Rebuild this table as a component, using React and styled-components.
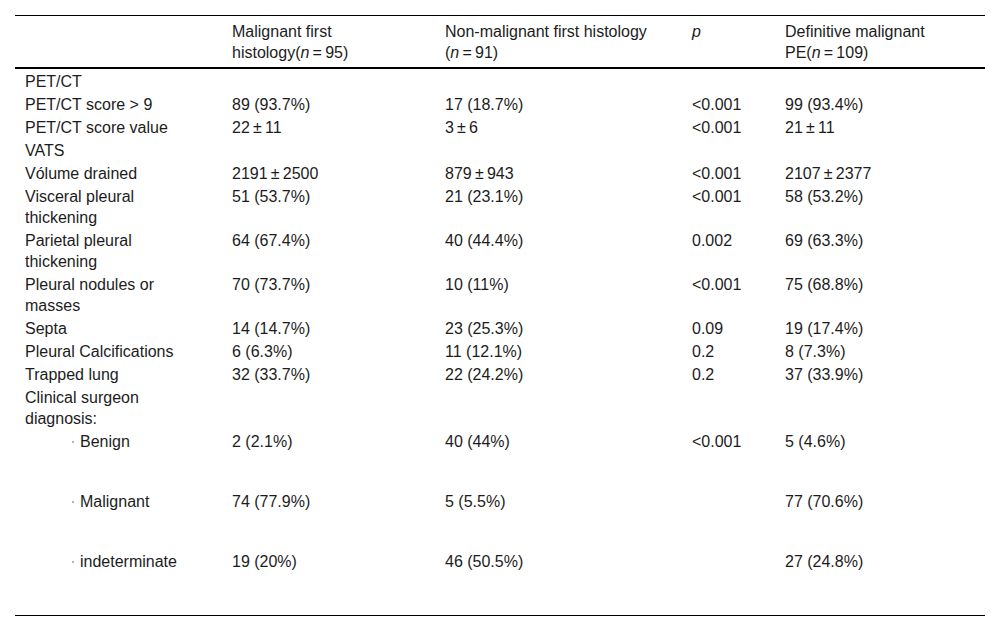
import React from "react";
import styled, { createGlobalStyle } from "styled-components";

const Global = createGlobalStyle`
  html, body { margin: 0; padding: 0; background: #fff; }
  body { font-family: "Liberation Sans", Arial, sans-serif; }
`;

const Table = styled.table`
  width: 970px;
  margin: 15px;
  border-collapse: separate;
  border-spacing: 0;
  table-layout: fixed;
  font-family: "Liberation Sans", Arial, sans-serif;
  font-size: 16px;
  line-height: 21px;
  color: #1c1c1c;
`;

const Th = styled.th`
  box-sizing: border-box;
  width: ${(p) => p.$w}px;
  text-align: left;
  font-weight: normal;
  vertical-align: top;
  padding: 5px ${(p) => (p.$first ? 40 : 10)}px 4px 10px;
  border-top: 1px solid #000;
  border-bottom: 2px solid #000;
`;

const Td = styled.td`
  box-sizing: border-box;
  text-align: left;
  vertical-align: top;
  padding: 2px ${(p) => (p.$first ? 40 : 10)}px ${(p) => p.$pb}px 10px;
  border-bottom: ${(p) => (p.$last ? "1px solid #000" : "none")};
`;

const Em = styled.i`
  font-style: italic;
`;

const NoWrap = styled.span`
  white-space: nowrap;
`;

const Bullet = styled.span`
  display: flex;
  align-items: center;
  padding-left: 47px;
  &::before {
    content: "";
    width: 2px;
    height: 2px;
    border-radius: 50%;
    background: #9a9a9a;
    margin-right: 6px;
    flex: none;
  }
`;

const T = "\u2009";

const cols = [207, 213, 247, 93, 210];

const rows = [
  { c: ["PET/CT", "", "", "", ""] },
  { c: ["PET/CT score > 9", "89 (93.7%)", "17 (18.7%)", "<0.001", "99 (93.4%)"] },
  { c: ["PET/CT score value", `22${T}±${T}11`, `3${T}±${T}6`, "<0.001", `21${T}±${T}11`] },
  { c: ["VATS", "", "", "", ""] },
  { c: ["Vólume drained", `2191${T}±${T}2500`, `879${T}±${T}943`, "<0.001", `2107${T}±${T}2377`] },
  { c: ["Visceral pleural thickening", "51 (53.7%)", "21 (23.1%)", "<0.001", "58 (53.2%)"] },
  { c: ["Parietal pleural thickening", "64 (67.4%)", "40 (44.4%)", "0.002", "69 (63.3%)"] },
  { c: ["Pleural nodules or masses", "70 (73.7%)", "10 (11%)", "<0.001", "75 (68.8%)"] },
  { c: ["Septa", "14 (14.7%)", "23 (25.3%)", "0.09", "19 (17.4%)"] },
  { c: ["Pleural Calcifications", "6 (6.3%)", "11 (12.1%)", "0.2", "8 (7.3%)"] },
  { c: ["Trapped lung", "32 (33.7%)", "22 (24.2%)", "0.2", "37 (33.9%)"] },
  { c: ["Clinical surgeon diagnosis:", "", "", "", ""] },
  { c: ["Benign", "2 (2.1%)", "40 (44%)", "<0.001", "5 (4.6%)"], bullet: true },
  { c: ["Malignant", "74 (77.9%)", "5 (5.5%)", "", "77 (70.6%)"], bullet: true },
  { c: ["indeterminate", "19 (20%)", "46 (50.5%)", "", "27 (24.8%)"], bullet: true, last: true },
];

export default function App() {
  return (
    <>
      <Global />
      <Table>
        <colgroup>
          {cols.map((w, i) => (
            <col key={i} style={{ width: w }} />
          ))}
        </colgroup>
        <thead>
          <tr>
            <Th $w={cols[0]} $first />
            <Th $w={cols[1]}>
              Malignant first <NoWrap>histology(<Em>n</Em>{T}={T}95)</NoWrap>
            </Th>
            <Th $w={cols[2]}>
              Non-malignant first histology <NoWrap>(<Em>n</Em>{T}={T}91)</NoWrap>
            </Th>
            <Th $w={cols[3]}>
              <Em>p</Em>
            </Th>
            <Th $w={cols[4]}>
              Definitive malignant <NoWrap>PE(<Em>n</Em>{T}={T}109)</NoWrap>
            </Th>
          </tr>
        </thead>
        <tbody>
          {rows.map((r, i) => {
            const pb = r.last ? 43 : r.bullet ? 37 : 0;
            return (
              <tr key={i}>
                {r.c.map((v, j) => (
                  <Td key={j} $first={j === 0} $pb={pb} $last={r.last}>
                    {j === 0 && r.bullet ? <Bullet>{v}</Bullet> : v}
                  </Td>
                ))}
              </tr>
            );
          })}
        </tbody>
      </Table>
    </>
  );
}
